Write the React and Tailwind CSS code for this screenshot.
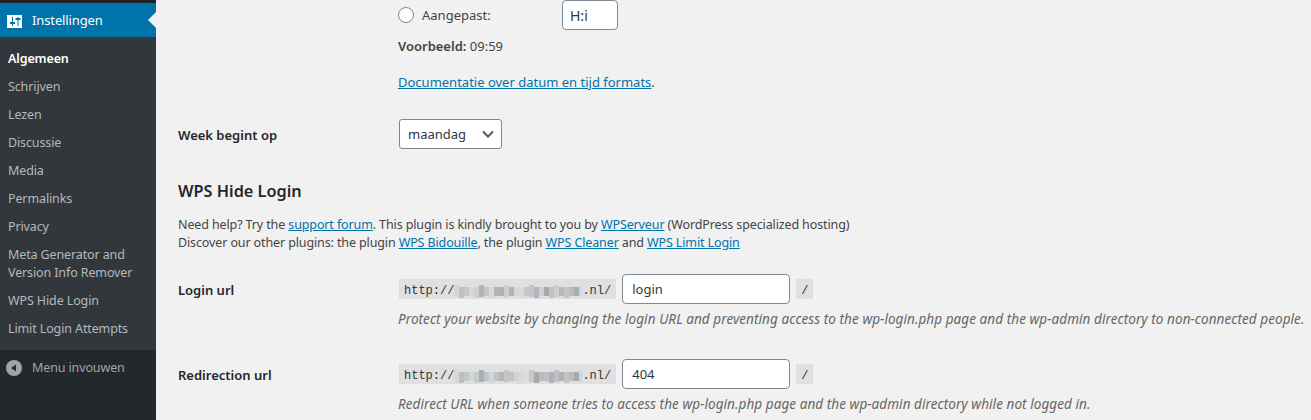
const menu = ['Schrijven', 'Lezen', 'Discussie', 'Media', 'Permalinks', 'Privacy'];
const blurA = ['#d6d6d6','#c2c0c2','#c6c6c4','#d8d8d6','#cfcfcf','#b0b4b6','#c4c6c6','#d8d8d8','#b4b4b6','#b0b0b2','#cfcdc8','#b4b2ae','#d6d6d6','#dadada','#c6c6c6','#c4c4c8','#b4b4c0','#d0d0d4','#aca6a6','#c6c0c2','#cfcfcf','#b8b8bc','#c4c4c8','#bcbcbc','#acacb0','#d8d8d8'];
const blurB = ['#d8d8d8','#c4bcc4','#c6c6c6','#d0d8d8','#c4ccd0','#a8b0b8','#c0c4c8','#d0d4dc','#c0c4cc','#b8b4b8','#c8c4c0','#c0c4c8','#d4d4d4','#d8d8d8','#dcdcdc','#c8c8c8','#a8a8b0','#bcb8bc','#c0c0c4','#b4b0b8','#c0c0c4','#b0b0b8','#c4c4c4','#bcbcbc','#a8a8b0','#d4d4d4'];

function Mosaic({ colors }) {
  return (
    <svg width="128" height="16" viewBox="0 0 128 16" className="shrink-0">
      <rect x="0" y="4" width="128" height="9" fill="#d2d2d2" />
      {colors.map((c, i) => (
        <rect key={i} x={i * 5} y={i % 5 === 0 ? 2 : 4} width="5" height={i % 5 === 0 ? 12 : i % 3 === 1 ? 11 : 9} fill={c} />
      ))}
    </svg>
  );
}

function UrlRow({ label, colors, value, help, className }) {
  return (
    <div className={`flex ${className}`}>
      <div className="w-[221px] shrink-0 pt-[7px] font-semibold text-[#23282d]">{label}</div>
      <div className="min-w-0">
        <div className="flex items-center h-[30px]">
          <code className="flex items-center h-[20px] px-[5px] pt-[3px] bg-[#e0e0e0] text-[12px] text-[#32373c] font-['Liberation_Mono',monospace]">
            http://<Mosaic colors={colors} />.nl/
          </code>
          <input
            readOnly
            value={value}
            className="w-[168px] h-[30px] ml-[6px] px-[9px] bg-white border border-[#7e8993] rounded-[4px] text-[#32373c] text-[13px] outline-none"
          />
          <code className="flex items-center h-[20px] ml-[6px] px-[5px] pt-[3px] bg-[#e0e0e0] text-[12px] text-[#32373c] font-['Liberation_Mono',monospace]">/</code>
        </div>
        <p className="mt-[6px] -ml-[1px] whitespace-nowrap italic text-[13.5px] tracking-[0.07px] text-[#666]">{help}</p>
      </div>
    </div>
  );
}

export default function App() {
  return (
    <div className="flex h-[420px] overflow-hidden bg-[#f1f1f1] text-[13px] leading-[18px] text-[#444] font-['Noto_Sans',sans-serif]">
      <aside className="w-[156px] shrink-0 flex flex-col bg-[#23282d] text-[12.5px] tracking-[-0.12px]">
        <div className="h-[3px] bg-[#1d2327]" />
        <div className="relative flex items-center h-[34px] bg-[#0073aa] text-white text-[13px]">
          <svg width="15" height="13" viewBox="0 0 15 13" className="ml-[7px] mr-[10px] mt-[3px]">
            <rect width="15" height="13" fill="#fff" />
            <path d="M5.5 2v9M11 2v9" stroke="#0073aa" strokeWidth="1" fill="none" />
            <path d="M3 8h5M8.5 4h5" stroke="#0073aa" strokeWidth="2" fill="none" />
          </svg>
          Instellingen
          <span className="absolute right-0 top-[9px] border-y-[8px] border-r-[8px] border-y-transparent border-r-[#f1f1f1]" />
        </div>
        <ul className="flex flex-col h-[313px] pt-[8px] bg-[#32373c] text-[#b4b9be]">
          <li className="h-[28px] pl-[8px] flex items-center font-semibold text-white">Algemeen</li>
          {menu.map((m) => (
            <li key={m} className="h-[28px] pl-[8px] flex items-center">{m}</li>
          ))}
          <li className="h-[46px] pl-[8px] pt-[5px]">Meta Generator and<br />Version Info Remover</li>
          <li className="h-[28px] pl-[8px] flex items-center">WPS Hide Login</li>
          <li className="h-[28px] pl-[8px] flex items-center">Limit Login Attempts</li>
        </ul>
        <div className="flex items-center h-[36px] text-[#a0a5aa]">
          <svg width="16" height="16" viewBox="0 0 16 16" className="ml-[6px] mr-[10px]">
            <circle cx="8" cy="8" r="8" fill="#a0a5aa" />
            <path d="M10 4.5v7L5 8z" fill="#23282d" />
          </svg>
          Menu invouwen
        </div>
      </aside>

      <main className="flex-1 min-w-0 pl-[22px]">
        <div className="pl-[220px]">
          <div className="flex items-start h-[30px]">
            <span className="mt-[7px] w-[16px] h-[16px] rounded-full bg-white border border-[#7e8993]" />
            <span className="ml-[8px] mt-[6px] w-[140px]">Aangepast:</span>
            <input
              readOnly
              value="H:i"
              className="w-[56px] h-[30px] px-[7px] bg-white border border-[#7e8993] rounded-[4px] text-[#32373c] text-[14px] outline-none"
            />
          </div>
          <p className="mt-[7px]"><b className="font-semibold">Voorbeeld:</b> 09:59</p>
          <p className="mt-[18px]">
            <a className="underline text-[#0073aa]">Documentatie over datum en tijd formats</a>.
          </p>
        </div>

        <div className="flex items-center mt-[28px]">
          <div className="w-[221px] pt-[1px] font-semibold text-[#23282d]">Week begint op</div>
          <div className="relative flex items-center w-[103px] h-[30px] pl-[8px] bg-white border border-[#7e8993] rounded-[3px] text-[#32373c] text-[13px]">
            maandag
            <svg width="14" height="14" viewBox="0 0 14 14" className="absolute right-[6px] top-[7px]">
              <path d="M2 4.5l5 5 5-5" stroke="#555" strokeWidth="2" fill="none" />
            </svg>
          </div>
        </div>

        <h2 className="mt-[30px] text-[16.3px] leading-[24px] font-semibold text-[#23282d]">WPS Hide Login</h2>
        <p className="mt-[13px] whitespace-nowrap text-[12.5px] tracking-[-0.12px]">
          Need help? Try the <a className="underline text-[#0073aa]">support forum</a>. This plugin is kindly brought to you by <a className="underline text-[#0073aa]">WPServeur</a> (WordPress specialized hosting)
          <br />
          Discover our other plugins: the plugin <a className="underline text-[#0073aa]">WPS Bidouille</a>, the plugin <a className="underline text-[#0073aa]">WPS Cleaner</a> and <a className="underline text-[#0073aa]">WPS Limit Login</a>
        </p>

        <UrlRow
          className="mt-[22px]"
          label="Login url"
          colors={blurA}
          value="login"
          help="Protect your website by changing the login URL and preventing access to the wp-login.php page and the wp-admin directory to non-connected people."
        />
        <UrlRow
          className="mt-[31px]"
          label="Redirection url"
          colors={blurB}
          value="404"
          help="Redirect URL when someone tries to access the wp-login.php page and the wp-admin directory while not logged in."
        />
      </main>
    </div>
  );
}
